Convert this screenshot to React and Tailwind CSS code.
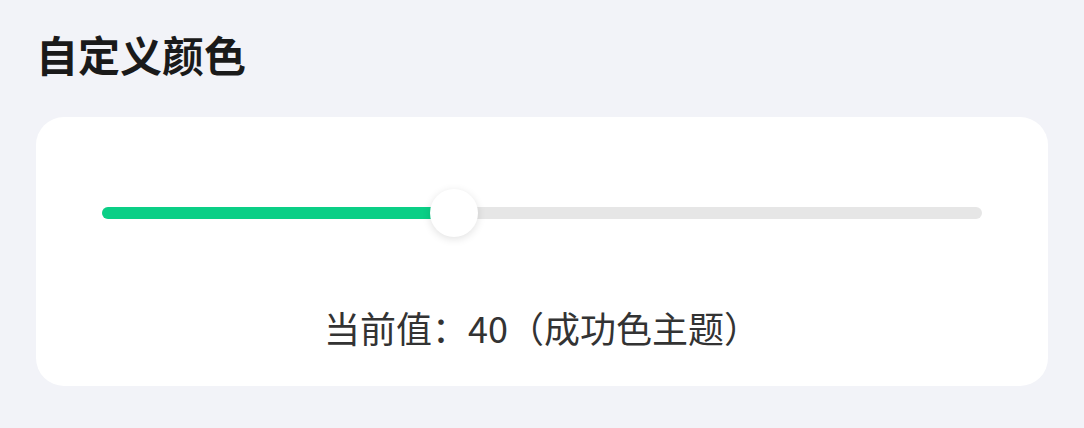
import React from "react";

const value = 40;

const Slider = ({ value }) => {
  return (
    <div className="relative flex h-[48px] items-center">
      <div className="h-[12px] w-full rounded-full bg-[#e6e6e6]">
        <div
          className="h-full rounded-full bg-[#0acf86]"
          style={{ width: `${value}%` }}
        />
      </div>
      <div
        className="absolute top-0 h-[48px] w-[48px] -translate-x-1/2 rounded-full bg-white shadow-[0_2px_8px_rgba(0,0,0,0.12)]"
        style={{ left: `${value}%` }}
      />
    </div>
  );
};

export default function App() {
  return (
    <div
      className="h-[428px] w-full bg-[#f2f3f8] px-[36px] pt-[30px]"
      style={{ fontFamily: '"Noto Sans CJK SC", "Noto Sans", sans-serif' }}
    >
      <h2 className="mb-[39px] text-[42px] font-bold leading-[48px] text-[#1a1a1a]">
        自定义颜色
      </h2>
      <div className="rounded-[28px] bg-white px-[66px] pt-[72px] pb-[35px]">
        <Slider value={value} />
        <p className="mt-[66px] text-center text-[36px] leading-[48px] text-[#333333]">
          当前值：{value}（成功色主题）
        </p>
      </div>
    </div>
  );
}
